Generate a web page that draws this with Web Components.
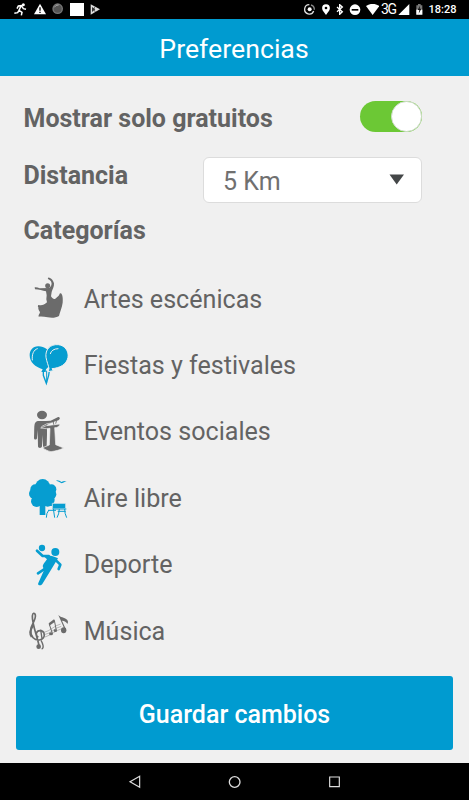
<!DOCTYPE html>
<html lang="es">
<head>
<meta charset="utf-8">
<title>Preferencias</title>
<style>
  body {
    margin: 0;
    background: #f0f0f0;
    font-family: Roboto, 'Liberation Sans', sans-serif;
  }
</style>
</head>
<body>
<app-screen>
  <status-bar slot="status" time="18:28" network="3G"></status-bar>
  <title-bar slot="title">Preferencias</title-bar>
  <pref-row class="free">Mostrar solo gratuitos<toggle-switch slot="control" checked></toggle-switch></pref-row>
  <pref-row class="distance">Distancia<select-box slot="control">5 Km</select-box></pref-row>
  <pref-row class="heading">Categorías</pref-row>
  <category-item icon="dance">Artes escénicas</category-item>
  <category-item icon="balloons" selected>Fiestas y festivales</category-item>
  <category-item icon="speaker">Eventos sociales</category-item>
  <category-item icon="park" selected>Aire libre</category-item>
  <category-item icon="sport" selected>Deporte</category-item>
  <category-item icon="music">Música</category-item>
  <save-button slot="action">Guardar cambios</save-button>
  <nav-bar slot="nav"></nav-bar>
</app-screen>

<script>
// icons are drawn at three units per pixel: [x, y, width, height], content
const ICONS = {
  run: [[42, 9, 39, 39], `<circle cx="70" cy="14" r="4.5"/><path d="M51 26l4-8 9-1 6 9 8 2M63 18l-6 13 9 6-2 9M57 31l-4 7-10 2" fill="none" stroke="currentColor" stroke-width="4.5"/>`],
  warning: [[99, 10, 36, 36], `<path d="M117 12l18 32H99z"/><path d="M115 23h4v10h-4zM115 36h4v4h-4z" fill="#000"/>`],
  disc: [[156, 11, 34, 36], `<circle cx="173" cy="28" r="16" fill="#777"/><circle cx="173" cy="28" r="12" fill="#555"/><path d="M163 24q4-8 13-7" stroke="#aaa" stroke-width="3" fill="none"/>`],
  block: [[207, 9, 42, 40], `<path d="M207 9h42v40h-42z"/>`],
  play: [[270, 12, 32, 33], `<path d="M272 13l28 15-28 16z" fill="#ddd"/><path d="M276 21l10 7-10 8z" fill="#333"/><path d="M285 20l-4 8 5 8" fill="none" stroke="#333" stroke-width="2"/>`],
  sync: [[41, 12, 34, 34], `<path d="M57 14a14 14 0 1 0 13 19" fill="none" stroke="#ddd" stroke-width="4"/><path d="M62 15a14 14 0 0 1 10 14" fill="none" stroke="#888" stroke-width="4"/><circle cx="58" cy="28" r="6"/>`],
  pin: [[94, 12, 24, 34], `<path d="M106 13c-14 0-14 15-7 22l7 10 7-10c7-7 7-22-7-22z"/><circle cx="106" cy="24" r="4" fill="#000"/>`],
  bluetooth: [[136, 12, 24, 34], `<path d="M139 21l16 14-8 8V14l8 7-16 14" fill="none" stroke="#fff" stroke-width="4"/>`],
  dnd: [[176, 12, 36, 34], `<circle cx="194" cy="29" r="16"/><path d="M184 27h20v5h-20z" fill="#000"/>`],
  wifi: [[226, 11, 40, 34], `<path d="M226 17q20-13 40 0l-20 27z"/>`],
  signal: [[323, 11, 35, 34], `<path d="M357 11v34h-34z"/>`],
  battery: [[377, 10, 20, 34], `<path d="M383 10h8v4h5v28h-18V14h5z" fill="#777"/><path d="M378 27h18v15h-18z"/><path d="M389 15l-7 13h5l-2 11 8-15h-5z" fill="#111"/>`],
  dance: [[0, 0, 180, 180], `<circle cx="83" cy="50" r="7.500"/><path d="M88 57c6-5 8-11 6-17-1-4-5-7-9-9-3-3-1-6 3-5 7 2 12 9 14 17 1 11-5 19-7 26l-2 13c5 7 8 9 13 7l10-9c4-3 1-8 7-7 5 4 6 17 5 28-2 15-9 29-11 40-9 6-23 6-34 4-10-2-18-3-27-2-2-5 4-9 4-14-3-3-6-9-5-14-2-2-2-7 1-7 9 3 17-1 25-8l-2-9 1-12-2-12c-10-2-21-5-33-6l-1-6c5-1 10 1 15 3z"/>`],
  balloons: [[0, 0, 180, 180], `<path d="M56 31C39 30 29 43 29 58c0 21 17 35 39 42l-4 8h13l1-8c14-13 17-25 14-41-4-19-19-27-36-28z"/><path d="M70 106v12l9 24 7-24 2-14" fill="none" stroke="currentColor" stroke-width="4"/><path d="M80 104v36" fill="none" stroke="currentColor" stroke-width="3"/><path d="M115 26c-25-2-40 15-37 38 2 13 8 26 9 34l-3 9 16-3-4-6c23-2 44-12 48-34 3-18-9-36-29-38z" stroke="#f0f0f0" stroke-width="3"/><path d="M37 72c-2-17 4-31 15-34M91 53c2-9 11-15 23-15" fill="none" stroke="#f0f0f0" stroke-width="3" stroke-linecap="round"/>`],
  speaker: [[0, 0, 180, 180], `<ellipse cx="66" cy="39" rx="15" ry="12.500"/><path d="M54 57h24l14-1 21-10c4-3 8 1 6 5-4 6-12 6-17 8l-21 9v30l-1 34c-1 7-10 7-11 0l-2-33-1 34c-1 7-12 6-12 0l-1-49-2 25c-1 5-9 5-9-1 1-20 0-34 2-42 2-5 5-8 10-9z"/><path d="M62 78l17-7 41-5c-2 8-8 11-16 11l3 51 24 10c-11 6-24 9-38 11-9-2-18-6-25-12l20-8 2-50-11 1z" stroke="#f0f0f0" stroke-width="2"/><path d="M64 74l17-9 15-2" fill="none" stroke="#f0f0f0" stroke-width="2"/><path d="M100 57l1 11M110 55l-3 10" stroke="currentColor" stroke-width="2.500"/>`],
  park: [[0, 0, 180, 180], `<circle cx="68" cy="55" r="22"/><circle cx="46" cy="64" r="15"/><circle cx="94" cy="64" r="15"/><circle cx="42" cy="77" r="15"/><circle cx="95" cy="79" r="14"/><circle cx="50" cy="100" r="17"/><circle cx="83" cy="95" r="21"/><path d="M44 60h52v54H48zM59 108h17v33H59z"/><path d="M97 106h40v16H97z" stroke="#f0f0f0" stroke-width="2"/><path d="M84 127h24M86 127q-7 8-7 22M100 122l4 27M98 123h41M118 123q-1 16-7 26M134 123q0 14 6 26M113 130h24" fill="none" stroke="currentColor" stroke-width="3"/><path d="M108 37c7-1 12 2 16 5 5-3 10-4 16-3-6 2-9 5-15 7-6-3-11-5-17-9z"/>`],
  sport: [[0, 0, 180, 180], `<circle cx="66" cy="39" r="9.500"/><circle cx="106" cy="51" r="12"/><path d="M51 47l17 16h18M105 73l16 16-5 13M78 99L54 115" fill="none" stroke="currentColor" stroke-width="8" stroke-linecap="round" stroke-linejoin="round"/><path d="M68 61c15-2 31 1 46 9l-19 31-28 46c-4 7-16 4-12-3l17-38-3-10c-3-4 6-15 12-23z"/>`],
  music: [[0, 0, 180, 180], `<path d="M58 139C54 113 36 70 37 45c1-10 7-11 9-3 3 14-13 29-14 45-1 21 12 31 26 30 11-1 17-10 14-20-4-11-20-11-23 0-1 6 2 10 6 12" fill="none" stroke="currentColor" stroke-width="5"/><path d="M40 73c-9 12-12 25-5 35" fill="none" stroke="currentColor" stroke-width="6"/><path d="M63 118c6 10 10 24 2 26M62 86l4 27" fill="none" stroke="currentColor" stroke-width="4"/><circle cx="56" cy="137" r="7"/><ellipse cx="93" cy="98" rx="6" ry="4.500"/><ellipse cx="106" cy="89" rx="5" ry="4"/><path d="M97 97l-9-27 15-12 6 30" fill="none" stroke="currentColor" stroke-width="3"/><path d="M86 67l16-12 3 7-17 12z"/><ellipse cx="131" cy="88" rx="8" ry="9"/><path d="M135 88L115 42c7 8 16 7 22 11 7 3 9 9 5 16-2-7-9-9-16-10l13 29z"/><path d="M72 94c18-3 31-21 50-25M73 101c20-3 30-21 51-25M75 108c18-5 31-20 51-25" fill="none" stroke="currentColor" stroke-width="1.300"/>`],
  back: [[84, 343, 40, 42], `<path d="M119 347v33l-29-16.500z" fill="none" stroke="#ddd" stroke-width="3.500"/>`],
  home: [[383, 343, 40, 42], `<circle cx="403" cy="364" r="16" fill="none" stroke="#ddd" stroke-width="4"/>`],
  recent: [[684, 343, 40, 42], `<path d="M689 349h29v29h-29z" fill="none" stroke="#ddd" stroke-width="3.500"/>`]
};

function icon(name) {
  const [box, content] = ICONS[name];
  return `<svg class="${name}" viewBox="${box.join(' ')}" width="${box[2] / 3}" height="${box[3] / 3}" fill="currentColor">${content}</svg>`;
}

class BaseElement extends HTMLElement {
  constructor() {
    super();
    this.attachShadow({ mode: 'open' });
  }

  connectedCallback() {
    this.shadowRoot.innerHTML = this.render();
  }
}

customElements.define('app-screen', class extends BaseElement {
  render() {
    return `
      <style>
        :host { display: flex; flex-direction: column; height: 800px; overflow: hidden; background: #f0f0f0; color: #636363; }
        main { flex: 1; min-height: 0; }
      </style>
      <slot name="status"></slot>
      <slot name="title"></slot>
      <main><slot></slot></main>
      <slot name="action"></slot>
      <slot name="nav"></slot>`;
  }
});

customElements.define('status-bar', class extends BaseElement {
  render() {
    return `
      <style>
        :host { display: flex; justify-content: space-between; height: 18.500px; background: #000; color: #fff; box-sizing: border-box; padding: 0 12px 0 14px; }
        div { display: flex; align-items: center; }
        svg { display: block; flex: none; }
        .left { gap: 6.500px; }
        .sync { margin-right: 6.300px; }
        .pin { margin-right: 6px; }
        .bluetooth { margin-right: 5.300px; }
        .dnd { margin-right: 4.700px; }
        .wifi { margin-right: 2px; }
        .signal { margin-left: 1px; margin-right: 6.300px; }
        .battery { margin-right: 6px; }
        .net { font-size: 14px; width: 16px; letter-spacing: -1.200px; line-height: 20px; }
        .time { font-size: 11px; font-weight: 500; width: 28.500px; line-height: 19px; white-space: nowrap; }
      </style>
      <div class="left">${['run', 'warning', 'disc', 'block', 'play'].map(icon).join('')}</div>
      <div>
        ${['sync', 'pin', 'bluetooth', 'dnd', 'wifi'].map(icon).join('')}
        <span class="net">${this.getAttribute('network')}</span>
        ${icon('signal')}${icon('battery')}
        <span class="time">${this.getAttribute('time')}</span>
      </div>`;
  }
});

customElements.define('title-bar', class extends BaseElement {
  render() {
    return `
      <style>
        :host { display: flex; justify-content: center; height: 57.500px; line-height: 61px; background: #009bd0; color: #fff; font-size: 26.700px; padding-right: 1px; }
      </style>
      <slot></slot>`;
  }
});

customElements.define('pref-row', class extends BaseElement {
  render() {
    return `
      <style>
        :host { display: flex; justify-content: space-between; align-items: center; height: 56px; padding: 0 47px 0 23.500px; font-size: 25px; font-weight: 700; }
        :host(.free) { padding-top: 14px; }
        :host(.distance) { height: 67px; }
        :host(.heading) { height: 38px; margin-bottom: 17px; margin-top: -2px; }
        :host(.distance) span { margin-top: -9px; }
      </style>
      <span><slot></slot></span>
      <slot name="control"></slot>`;
  }
});

customElements.define('toggle-switch', class extends BaseElement {
  render() {
    return `
      <style>
        :host { display: flex; box-sizing: border-box; width: 62.500px; height: 31px; margin-top: -3px; border-radius: 16px; background: #ccc; }
        :host([checked]) { background: #6cc835; justify-content: flex-end; }
        i { box-sizing: border-box; width: 31px; height: 31px; border: 1px solid #cfdcca; border-radius: 50%; background: #fff; }
      </style>
      <i></i>`;
  }
});

customElements.define('select-box', class extends BaseElement {
  render() {
    return `
      <style>
        :host { display: flex; justify-content: space-between; align-items: center; box-sizing: border-box; width: 219px; height: 46px; padding: 3px 16px 0 19px; border: 1px solid #dcdcdc; border-radius: 6px; background: #fff; font-weight: 400; font-size: 25px; color: #707070; }
        svg { display: block; margin-top: -4px; }
      </style>
      <slot></slot>
      <svg width="16" height="11" viewBox="0 0 16 11"><path d="M0.500 0.500h14.500L7.700 10.500z" fill="#444748"/></svg>`;
  }
});

customElements.define('category-item', class extends BaseElement {
  render() {
    return `
      <style>
        :host { display: flex; align-items: center; height: 66.400px; padding-left: 20px; gap: 3.700px; font-size: 25.100px; }
        svg { display: block; color: #6b6b6b; }
        :host([selected]) svg { color: #069dd0; }
      </style>
      ${icon(this.getAttribute('icon'))}
      <span><slot></slot></span>`;
  }
});

customElements.define('save-button', class extends BaseElement {
  render() {
    return `
      <style>
        :host { display: flex; justify-content: center; height: 74px; margin: 0 16px 13px; border-radius: 3px; line-height: 77px; background: #009bd0; color: #fff; font-size: 25px; font-weight: 500; }
      </style>
      <slot></slot>`;
  }
});

customElements.define('nav-bar', class extends BaseElement {
  render() {
    return `
      <style>
        :host { display: flex; align-items: center; justify-content: center; gap: 86.600px; height: 37px; background: #000; }
        svg { display: block; }
      </style>
      ${['back', 'home', 'recent'].map(icon).join('')}`;
  }
});
</script>
</body>
</html>
